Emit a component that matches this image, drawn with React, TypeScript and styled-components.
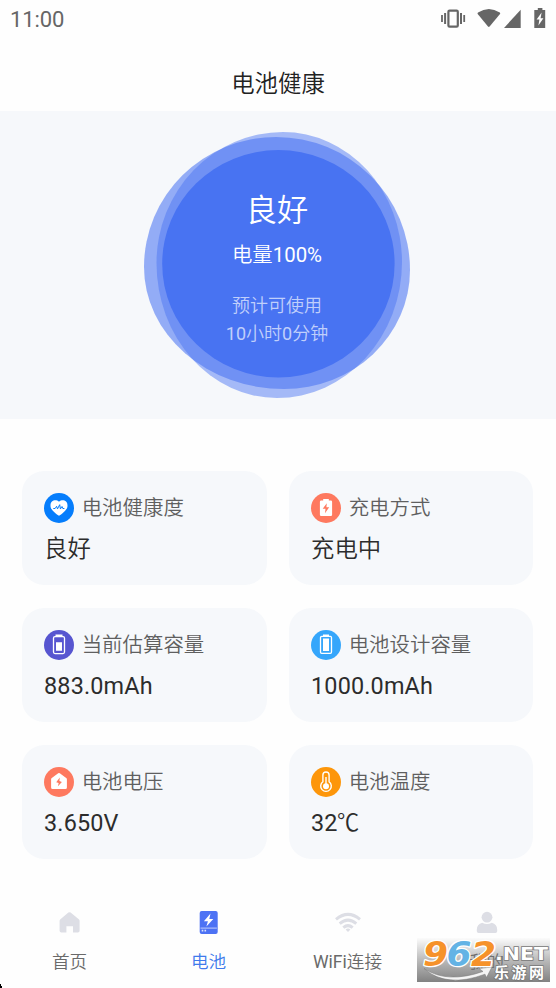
import React from 'react';
import styled, { createGlobalStyle } from 'styled-components';

const GlobalStyle = createGlobalStyle`
  * { box-sizing: border-box; }
  body {
    margin: 0;
    background: #fff;
    font-family: Roboto, 'Noto Sans CJK SC', sans-serif;
    font-weight: 350;
    color: #333;
  }
`;

const Screen = styled.div`
  position: relative;
  width: 556px;
  height: 988px;
  overflow: hidden;
  display: flex;
  flex-direction: column;
  background: #fefefe;
`;

const StatusBar = styled.header`
  height: 38px;
  flex: none;
  display: flex;
  align-items: center;
  justify-content: space-between;
  padding-left: 10px;
  font-size: 22px;
  font-weight: 450;
  color: #666;
  letter-spacing: -0.1px;
`;

const TitleBar = styled.div`
  height: 73px;
  flex: none;
  display: flex;
  justify-content: center;
  padding-top: 29px;
  font-size: 23.4px;
  line-height: 34px;
  color: #222;
`;

const Hero = styled.section`
  height: 308px;
  flex: none;
  display: grid;
  justify-items: center;
  background: #f6f8fb;
  & > * { grid-area: 1 / 1; }
`;

const HeroText = styled.div`
  display: flex;
  flex-direction: column;
  align-items: center;
  z-index: 1;
  padding: 77px 2px 0 0;
`;

const Line = styled.div<{ $size: number; $height: number; $gap?: number; $soft?: boolean }>`
  font-size: ${(p) => p.$size}px;
  line-height: ${(p) => p.$height}px;
  margin-top: ${(p) => p.$gap ?? 0}px;
  color: ${(p) => (p.$soft ? '#c0cffb' : '#fff')};
`;

const Latin = styled.span`
  font-weight: 400;
`;

const Grid = styled.main`
  flex: none;
  display: grid;
  grid-template-columns: 245px 244px;
  grid-auto-rows: 114px;
  gap: 23px 22px;
  padding: 52px 22px 0;
`;

const Card = styled.article`
  border-radius: 22px;
  background: #f6f8fb;
  padding: 22px 22px 0;
`;

const CardHead = styled.div`
  display: flex;
  align-items: center;
  gap: 7.7px;
  height: 30px;
  font-size: 20.45px;
  line-height: 28px;
  color: #5f5f5f;
  white-space: nowrap;
  svg { flex: none; }
`;

const Value = styled.div`
  margin-top: 9px;
  font-size: 23.4px;
  line-height: 34px;
  color: #2c2c2c;
  ${Latin} { letter-spacing: 0.17px; }
`;

const Degree = styled.span`
  display: inline-block;
  margin-left: -1px;
  transform: scaleX(0.95);
  transform-origin: left;
`;

const Tabs = styled.nav`
  margin-top: 39px;
  flex: none;
  display: grid;
  grid-template-columns: repeat(4, 1fr);
  height: 90px;
`;

const Tab = styled.div<{ $active?: boolean }>`
  display: flex;
  flex-direction: column;
  align-items: center;
  padding-top: 10px;
  font-size: 17.6px;
  line-height: 26px;
  color: ${(p) => (p.$active ? '#3f7aec' : '#6a6a6a')};
  svg { margin-bottom: 13px; }
`;

const Watermark = styled.svg`
  position: absolute;
  left: 417px;
  top: 938px;
  overflow: visible;
`;

const Speck = styled.svg`
  position: absolute;
  left: 0;
  bottom: 0;
`;

function StatusIcons() {
  return (
    <svg width="126" height="38" viewBox="430 0 126 38" fill="#666">
      <rect x="448.4" y="10.6" width="9.4" height="16" rx="1.2" fill="none" stroke="#666" strokeWidth="2.2" />
      <path d="M444.1 13h2v11h-2zM441.1 15h1.8v7h-1.8zM460 13h2v11h-2zM463.3 15h1.8v7h-1.8z" />
      <path d="M478 12.6Q488.8 5.4 499.8 12.6Q500.6 13.3 500 14.1L489.6 26.6Q488.8 27.4 488 26.6L477.7 14.1Q477.2 13.3 478 12.6Z" />
      <path d="M504 27.9L520.7 9.8v18.1z" />
      <path d="M537.8 8h4.6v2h2.8v18h-10.9V10h3.5z" />
      <path fill="#fff" d="M541.6 12.6l-5 7h2.8l-1 6 5-7.4h-2.8z" />
    </svg>
  );
}

function Blobs() {
  return (
    <svg width="290" height="300" viewBox="133 111 290 300">
      <path
        fill="#4873f2"
        fillOpacity=".57"
        d="M144 267A132 130 0 0 1 276 137A134 133 0 0 1 410 270A126 119 0 0 1 284 389A140 122 0 0 1 144 267Z"
      />
      <path
        fill="#4873f2"
        fillOpacity=".47"
        d="M156.5 263A126.5 131 0 0 1 283 132A119 130 0 0 1 402 262A125 136 0 0 1 277 398A120.5 135 0 0 1 156.5 263Z"
      />
      <ellipse cx="278.4" cy="263.7" rx="116.2" ry="113.7" fill="#4873f2" />
    </svg>
  );
}

const CARD_ICONS = {
  heart: { bg: '#057dfc', art: (
    <>
      <path fill="#fff" d="M15 22.7Q13.6 22.4 9.6 18.6C6.6 15.6 6.5 13.8 6.5 12.4C6.5 7 12 6.1 15 8.7C18 6.1 23.5 7 23.5 12.4C23.5 13.8 23.4 15.6 20.4 18.6Q16.4 22.4 15 22.7Z" />
      <path fill="none" stroke="#057dfc" strokeWidth="1" strokeLinecap="round" strokeLinejoin="round" d="M9.7 15.5h1.4l1.5-2.2 .9 2.6 2.2-4.2.7 4.2 1.6-2.4.8 2h1.2" />
    </>
  ) },
  charge: { bg: '#fe795f', art: (
    <>
      <path fill="#fff" d="M12.2 6h5.6v1.5h2.1q1.2 0 1.2 1.2v13q0 1.2-1.2 1.2h-9.8q-1.2 0-1.2-1.2v-13q0-1.2 1.2-1.2h2.1z" />
      <path fill="#fe795f" d="M15.8 10.2l-4.1 5.6h2.8l-.5 4.4 4.2-6h-2.8z" />
    </>
  ) },
  half: { bg: '#5755d0', art: (
    <>
      <rect x="9.5" y="6.6" width="11" height="17" rx="1.5" fill="none" stroke="#fff" strokeWidth="1.3" />
      <path fill="#fff" d="M11.5 4.6h7v2h-7zM12 12.2h6v8.6h-6z" />
    </>
  ) },
  full: { bg: '#35a6fb', art: (
    <>
      <rect x="9.5" y="6.3" width="11" height="17" rx="1.2" fill="none" stroke="#fff" strokeWidth="1.3" />
      <path fill="#fff" d="M12 4.4h6v2h-6zM12 8.6h6v12.5h-6z" />
    </>
  ) },
  voltage: { bg: '#fe795f', art: (
    <>
      <path fill="#fff" d="M14.2 6.2q.8-.6 1.6 0l6.4 4.7q.7.5.7 1.4v8.2q0 1.5-1.5 1.5H8.6q-1.5 0-1.5-1.5v-8.2q0-.9.7-1.4z" />
      <path fill="#fe795f" d="M15.8 10.5l-3.6 4.7 2.5.8-.8 3.3 4-4.2-2.5-1.2z" />
    </>
  ) },
  temp: { bg: '#fd960a', art: (
    <>
      <path fill="none" stroke="#fff" strokeWidth="1.4" d="M11.9 14.8V8.1a3.1 3.1 0 0 1 6.2 0v6.7a5.3 5.3 0 1 1-6.2 0z" />
      <circle cx="15" cy="19.3" r="3" fill="#fff" />
      <path stroke="#fff" strokeWidth="1.4" d="M15 10v8" />
    </>
  ) },
};

type IconName = keyof typeof CARD_ICONS;

function CardIcon({ name }: { name: IconName }) {
  const { bg, art } = CARD_ICONS[name];
  return (
    <svg width="30" height="30" viewBox="0 0 30 30">
      <circle cx="15" cy="15" r="15" fill={bg} />
      {art}
    </svg>
  );
}

const STATS: { icon: IconName; label: string; value: React.ReactNode }[] = [
  { icon: 'heart', label: '电池健康度', value: '良好' },
  { icon: 'charge', label: '充电方式', value: '充电中' },
  { icon: 'half', label: '当前估算容量', value: <Latin>883.0mAh</Latin> },
  { icon: 'full', label: '电池设计容量', value: <Latin>1000.0mAh</Latin> },
  { icon: 'voltage', label: '电池电压', value: <Latin>3.650V</Latin> },
  { icon: 'temp', label: '电池温度', value: <><Latin>32</Latin><Degree>℃</Degree></> },
];

function HomeIcon() {
  return (
    <svg width="28" height="28" viewBox="0 0 28 28">
      <path fill="#dddee5" d="M12.4 4.6q1.1-.9 2.2 0l8.2 6.6q.8.6.8 1.7v9.9q0 1.8-1.8 1.8H17v-6.4h-6.6v6.4H5.4q-1.8 0-1.8-1.8v-9.9q0-1.1.8-1.7z" />
    </svg>
  );
}

function BatteryIcon() {
  return (
    <svg width="28" height="28" viewBox="0 0 28 28">
      <rect x="4.7" y="3" width="18" height="23" rx="2" fill="#4d72f4" />
      <path fill="#fff" d="M15.5 5.4L8.9 13.2h4l-1.5 5.2L18.3 11h-4z" />
      <path stroke="#c3cefb" d="M5.5 20.1h16.4" />
      <path fill="#dce3fd" d="M6.7 21.8h1.6v1.6H6.7zM9.5 21.8h1.6v1.6H9.5z" />
    </svg>
  );
}

function WifiIcon() {
  return (
    <svg width="28" height="28" viewBox="0 0 28 28">
      <g fill="none" stroke="#dddee5" strokeWidth="3">
        <path d="M2 11.4Q14 1.4 26 11.4" />
        <path d="M5.7 15.7Q14 8.5 22.3 15.7" />
        <path d="M9.3 19.6Q14 15.7 18.7 19.6" />
      </g>
      <path fill="#dddee5" d="M11.6 21.6q2.4-2 4.8 0L14 24z" />
    </svg>
  );
}

function UserIcon() {
  return (
    <svg width="28" height="28" viewBox="0 0 28 28" fill="#dddee5">
      <circle cx="14" cy="9.2" r="5.4" />
      <path d="M3.8 21.7q0-5.4 5.4-7 4.8 2.6 9.6 0 5.4 1.6 5.4 7v1.5q0 1.8-1.8 1.8H5.6q-1.8 0-1.8-1.8z" />
    </svg>
  );
}

function SiteMark() {
  return (
    <Watermark width="133" height="44" viewBox="0 0 133 44">
      <defs>
        <linearGradient id="shade" x2="0" y2="1">
          <stop offset="0" stopColor="#777" stopOpacity=".02" />
          <stop offset=".5" stopColor="#777" stopOpacity=".5" />
          <stop offset="1" stopColor="#777" stopOpacity=".92" />
        </linearGradient>
      </defs>
      <rect width="133" height="44" fill="url(#shade)" />
      <path d="M7 30.5Q30 46 66 33.5L62 30.5 75 29 69.5 39.5 68 36.2Q29 50.5 7 30.5Z" fill="#f4f4f4" stroke="#777" strokeWidth=".5" />
      <g fontFamily="DejaVu Sans, sans-serif" fontWeight="700" fontStyle="italic" fontSize="33" paintOrder="stroke" stroke="#fff" strokeWidth="2.6" strokeLinejoin="round">
        <text x="6" y="28" fill="#f6922a" textLength="25" lengthAdjust="spacingAndGlyphs">9</text>
        <text x="29.5" y="28" fill="#63b3e5" textLength="25" lengthAdjust="spacingAndGlyphs">6</text>
        <text x="54" y="28" fill="#f6922a" textLength="25" lengthAdjust="spacingAndGlyphs">2</text>
      </g>
      <g fill="#fff" paintOrder="stroke" stroke="#777" strokeWidth="1.4" fontWeight="700">
        <text x="78" y="21.8" fontFamily="DejaVu Sans, sans-serif" fontSize="17" textLength="53" lengthAdjust="spacingAndGlyphs">.NET</text>
        <text x="77" y="39.5" fontFamily="Noto Sans CJK SC, sans-serif" fontSize="15" textLength="50">乐游网</text>
      </g>
    </Watermark>
  );
}

export default function App() {
  return (
    <>
      <GlobalStyle />
      <Screen>
        <StatusBar>
          <span>11:00</span>
          <StatusIcons />
        </StatusBar>
        <TitleBar>电池健康</TitleBar>
        <Hero>
          <Blobs />
          <HeroText>
            <Line $size={31.2} $height={46}>良好</Line>
            <Line $size={20.4} $height={30} $gap={6}>电量<Latin>100%</Latin></Line>
            <Line $size={18} $height={28} $gap={22} $soft>预计可使用</Line>
            <Line $size={18} $height={28} $soft><Latin>10</Latin>小时<Latin>0</Latin>分钟</Line>
          </HeroText>
        </Hero>
        <Grid>
          {STATS.map((s) => (
            <Card key={s.label}>
              <CardHead>
                <CardIcon name={s.icon} />
                {s.label}
              </CardHead>
              <Value>{s.value}</Value>
            </Card>
          ))}
        </Grid>
        <Tabs>
          <Tab><HomeIcon />首页</Tab>
          <Tab $active><BatteryIcon />电池</Tab>
          <Tab><WifiIcon /><span><Latin>WiFi</Latin>连接</span></Tab>
          <Tab><UserIcon />我的</Tab>
        </Tabs>
        <SiteMark />
        <Speck width="3" height="4" viewBox="0 0 3 4">
          <path d="M0 0h1v2h1v2H0z" />
        </Speck>
      </Screen>
    </>
  );
}
